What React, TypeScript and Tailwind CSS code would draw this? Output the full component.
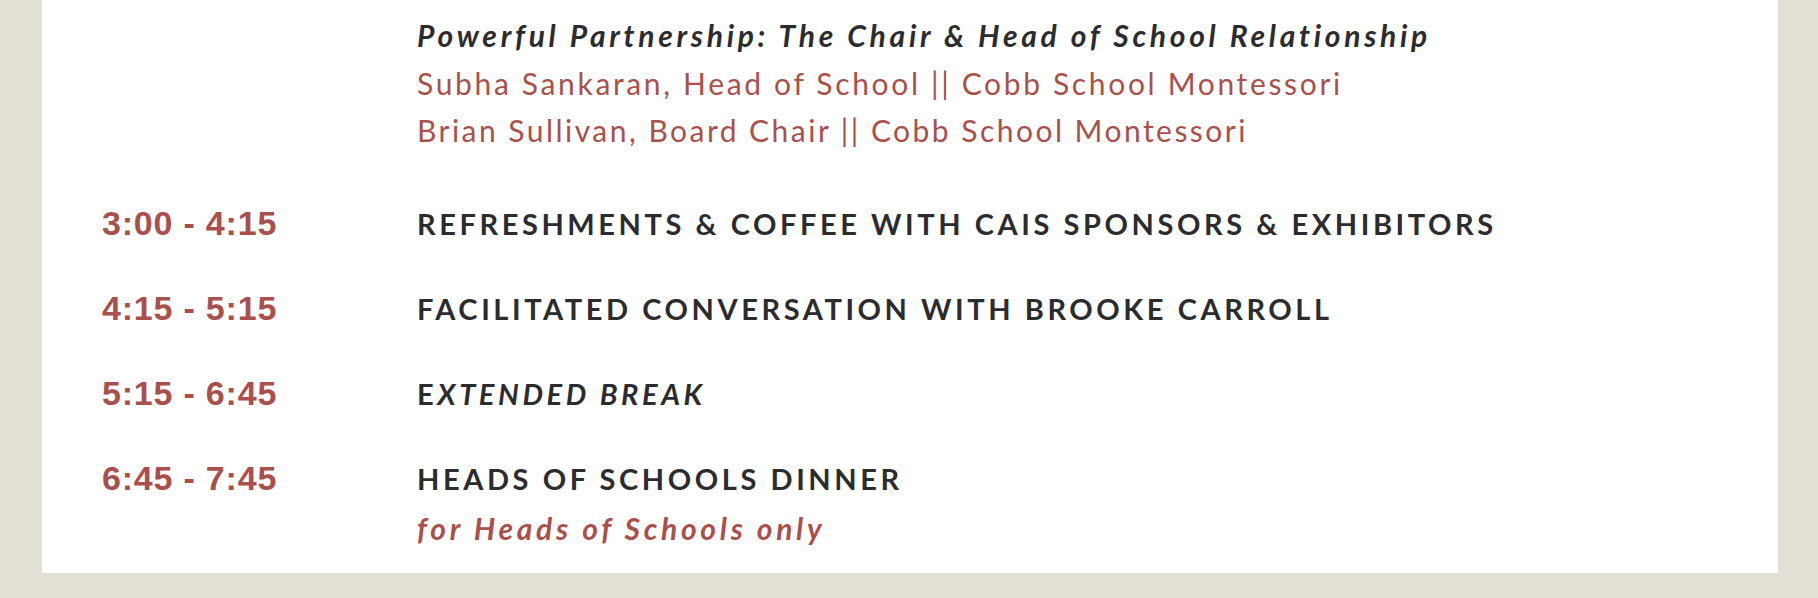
export default function App() {
  const rows = [
    { time: "3:00 - 4:15", title: <>REFRESHMENTS &amp; COFFEE WITH CAIS SPONSORS &amp; EXHIBITORS</> },
    { time: "4:15 - 5:15", title: <>FACILITATED CONVERSATION WITH BROOKE CARROLL</> },
    { time: "5:15 - 6:45", title: <>E<em>XTENDED BREAK</em></> },
    { time: "6:45 - 7:45", title: <>HEADS OF SCHOOLS DINNER</>, sub: "for Heads of Schools only" },
  ];
  return (
    <div className="min-h-[598px] bg-[#e2dfd5] pl-[42px] pr-[40px] pb-[25px] font-['Lato',sans-serif]">
      <div className="bg-white pl-[60px] pt-[12px] pb-[20px]">
        <div className="flex">
          <div className="w-[315px] shrink-0" />
          <div className="text-[30px] leading-[47.5px]">
            <p className="font-bold italic tracking-[3.72px] text-[#2b2c30]">Powerful Partnership: The Chair &amp; Head of School Relationship</p>
            <p className="tracking-[2.66px] text-[#a9504d]">Subha Sankaran, Head of School || Cobb School Montessori</p>
            <p className="tracking-[2.47px] text-[#a9504d]">Brian Sullivan, Board Chair || Cobb School Montessori</p>
          </div>
        </div>
        <div className="mt-[43px] flex flex-col gap-[34px]">
          {rows.map((r) => (
            <div key={r.time} className="flex items-baseline">
              <div className="w-[315px] shrink-0 font-['Liberation_Sans',Arial,sans-serif] text-[34px] font-bold leading-[50px] tracking-[0.8px] text-[#a9504d]">
                {r.time}
              </div>
              <div>
                <div className="text-[29px] font-bold uppercase leading-[50px] tracking-[3.58px] text-[#2b2c30]">{r.title}</div>
                {r.sub && (
                  <div className="text-[30px] font-bold italic leading-[49px] tracking-[3.7px] text-[#a9504d]">{r.sub}</div>
                )}
              </div>
            </div>
          ))}
        </div>
      </div>
    </div>
  );
}
